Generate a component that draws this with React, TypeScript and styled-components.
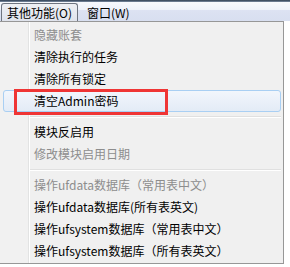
import styled, { createGlobalStyle } from "styled-components";

const GlobalStyle = createGlobalStyle`
  html, body {
    margin: 0;
    padding: 0;
    background: #ffffff;
  }
  body {
    font-family: "Noto Sans CJK SC", "Noto Sans", sans-serif;
    font-size: 12px;
    color: #000;
  }
`;

const Screen = styled.div`
  width: 290px;
  height: 267px;
  overflow: hidden;
  display: flex;
  flex-direction: column;
`;

const TitleEdge = styled.div`
  height: 2px;
  background: linear-gradient(to bottom, #2b3b4e, #7d8ea3);
`;

const MenuBar = styled.div`
  height: 19px;
  display: flex;
  align-items: flex-end;
  padding-left: 1px;
  background: linear-gradient(
    to bottom,
    #f7f9fd 0%,
    #eef2fa 40%,
    #dce2f2 45%,
    #d8dff0 100%
  );
`;

const BarItem = styled.div<{ $open?: boolean }>`
  height: 17px;
  line-height: 17px;
  padding: 0 5px 0 5px;
  margin-right: ${(p) => (p.$open ? "3px" : "0")};
  border: 1px solid ${(p) => (p.$open ? "#6f7580" : "transparent")};
  border-bottom: none;
  border-radius: 3px 3px 0 0;
  background: ${(p) =>
    p.$open ? "linear-gradient(to bottom, #eef0f4, #dfe3ec)" : "transparent"};
  white-space: nowrap;
`;

const Dropdown = styled.div`
  width: 283px;
  border-top: 1px solid #979797;
  border-right: 1px solid #979797;
  border-bottom: 1px solid #979797;
  padding: 2px 0 1px 0;
  display: flex;
  flex-direction: column;
  background: linear-gradient(
    to right,
    #f1f1f1 28px,
    #e2e3e3 28px,
    #e2e3e3 29px,
    #ffffff 29px,
    #ffffff 30px,
    #f0f0f0 30px
  );
`;

const Item = styled.div<{ $disabled?: boolean; $hover?: boolean }>`
  position: relative;
  height: 20px;
  line-height: 20px;
  margin: 0 2px 0 3px;
  padding-left: 30px;
  border: 1px solid ${(p) => (p.$hover ? "#a9cff3" : "transparent")};
  border-radius: 3px;
  background: ${(p) =>
    p.$hover ? "linear-gradient(to bottom, #f2f6fc, #e3ebf6)" : "transparent"};
  color: ${(p) => (p.$disabled ? "#8d8d8d" : "#000")};
  white-space: nowrap;
`;

const Separator = styled.div`
  height: 9px;
  margin: 0 2px 0 30px;
  display: flex;
  align-items: center;

  &::before {
    content: "";
    flex: 1;
    border-top: 1px solid #e0e0e0;
    border-bottom: 1px solid #ffffff;
  }
`;

const Highlight = styled.div`
  position: absolute;
  left: 10px;
  top: -2px;
  width: 148px;
  height: 20px;
  border: 3px solid #ef3535;
  pointer-events: none;
`;

type Entry =
  | { kind: "item"; label: string; disabled?: boolean; hover?: boolean }
  | { kind: "sep" };

const entries: Entry[] = [
  { kind: "item", label: "隐藏账套", disabled: true },
  { kind: "item", label: "清除执行的任务" },
  { kind: "item", label: "清除所有锁定" },
  { kind: "item", label: "清空Admin密码", hover: true },
  { kind: "sep" },
  { kind: "item", label: "模块反启用" },
  { kind: "item", label: "修改模块启用日期", disabled: true },
  { kind: "sep" },
  { kind: "item", label: "操作ufdata数据库（常用表中文）", disabled: true },
  { kind: "item", label: "操作ufdata数据库(所有表英文)" },
  { kind: "item", label: "操作ufsystem数据库（常用表中文）" },
  { kind: "item", label: "操作ufsystem数据库（所有表英文）" },
];

export default function App() {
  return (
    <Screen>
      <GlobalStyle />
      <TitleEdge />
      <MenuBar>
        <BarItem $open>其他功能(O)</BarItem>
        <BarItem>窗口(W)</BarItem>
      </MenuBar>
      <Dropdown>
        {entries.map((e, i) =>
          e.kind === "sep" ? (
            <Separator key={i} />
          ) : (
            <Item key={i} $disabled={e.disabled} $hover={e.hover}>
              {e.label}
              {e.hover && <Highlight />}
            </Item>
          )
        )}
      </Dropdown>
    </Screen>
  );
}
